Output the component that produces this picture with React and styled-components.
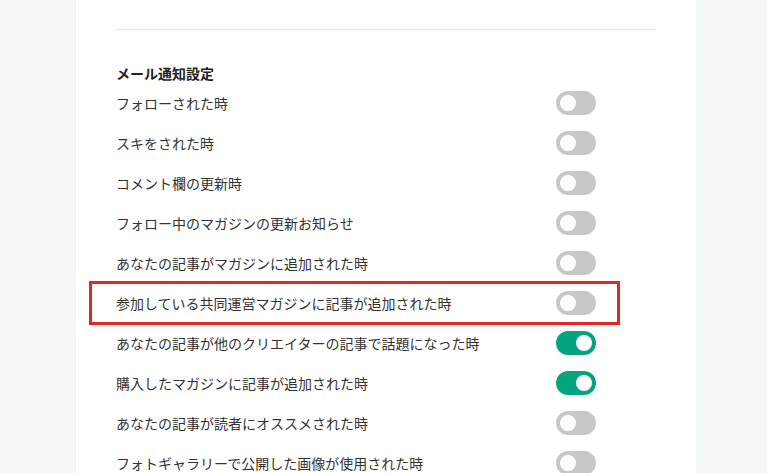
import React from "react";
import styled, { createGlobalStyle } from "styled-components";

const GlobalStyle = createGlobalStyle`
    html, body {
        margin: 0;
        padding: 0;
        background: #f5f7f6;
    }
    body {
        font-family: "Noto Sans CJK JP", "Noto Sans", sans-serif;
        color: #333;
        overflow: hidden;
    }
`;

const settings = [
    { label: "フォローされた時", on: false },
    { label: "スキをされた時", on: false },
    { label: "コメント欄の更新時", on: false },
    { label: "フォロー中のマガジンの更新お知らせ", on: false },
    { label: "あなたの記事がマガジンに追加された時", on: false },
    { label: "参加している共同運営マガジンに記事が追加された時", on: false, marked: true },
    { label: "あなたの記事が他のクリエイターの記事で話題になった時", on: true },
    { label: "購入したマガジンに記事が追加された時", on: true },
    { label: "あなたの記事が読者にオススメされた時", on: false },
    { label: "フォトギャラリーで公開した画像が使用された時", on: false },
];

const App = () => {
    return (
        <>
            <GlobalStyle />
            <StyledPage>
                <div />
                <StyledPanel>
                    <StyledDivider />
                    <StyledHeading>メール通知設定</StyledHeading>
                    <StyledList>
                        {settings.map((item) => (
                            <StyledRow key={item.label} $marked={item.marked}>
                                <span>{item.label}</span>
                                <StyledToggle $on={item.on} />
                            </StyledRow>
                        ))}
                    </StyledList>
                </StyledPanel>
                <div />
            </StyledPage>
        </>
    );
};

const StyledPage = styled.div`
    display: grid;
    grid-template-columns: 76px 620px 1fr;
    height: 473px;
    overflow: hidden;
`;

const StyledPanel = styled.div`
    background: #fff;
    padding: 0 40px;
`;

const StyledDivider = styled.div`
    height: 29px;
    border-bottom: 1px solid #e2e2e2;
`;

const StyledHeading = styled.h3`
    margin: 33px 0 0;
    font-size: 14px;
    line-height: 20px;
    font-weight: 700;
    color: #222;
`;

const StyledList = styled.div`
    display: flex;
    flex-direction: column;
    padding-right: 60px;
`;

const StyledRow = styled.div`
    position: relative;
    display: flex;
    align-items: center;
    justify-content: space-between;
    height: 40px;
    font-size: 14px;
    color: #333;
    &::after {
        content: "";
        display: ${(p) => (p.$marked ? "block" : "none")};
        position: absolute;
        top: -2px;
        bottom: -2px;
        left: -27px;
        right: -24px;
        border: 3px solid #e82520;
    }
`;

const StyledToggle = styled.div`
    position: relative;
    width: 40px;
    height: 24px;
    border-radius: 12px;
    background: ${(p) => (p.$on ? "#03a47f" : "#c8c8c8")};
    &::before {
        content: "";
        position: absolute;
        top: 4px;
        left: ${(p) => (p.$on ? "20px" : "4px")};
        width: 16px;
        height: 16px;
        border-radius: 50%;
        background: #fff;
    }
`;

export default App;
